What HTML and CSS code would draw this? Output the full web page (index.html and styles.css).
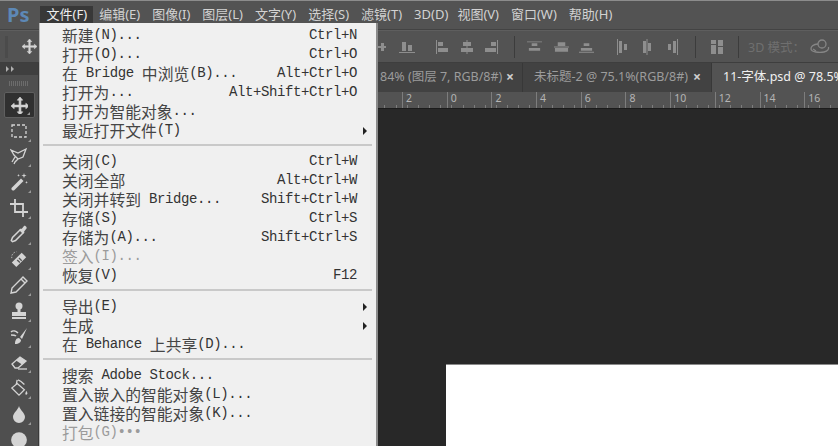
FILE: index.html
```html
<!DOCTYPE html>
<html lang="zh">
<head>
<meta charset="utf-8">
<title>Photoshop</title>
<link rel="stylesheet" href="styles.css">
</head>
<body>
<svg class="defs" width="0" height="0" aria-hidden="true">
  <symbol id="move" viewBox="0 0 16 16"><path d="M8 0 5.600 2.800h1.600v4.400H2.800V5.600L0 8l2.800 2.400V8.800h4.400v4.400H5.600L8 16l2.400-2.800H8.800V8.800h4.400v1.600L16 8l-2.800-2.400v1.600H8.800V2.800h1.600z" fill="currentColor" stroke="currentColor" stroke-width=".6"/></symbol>
</svg>
<div class="app">
  <header class="menubar">
    <span class="logo">Ps</span>
    <nav class="menus">
      <span class="m active">文件(F)</span><span class="m">编辑(E)</span><span class="m">图像(I)</span><span class="m">图层(L)</span><span class="m">文字(Y)</span><span class="m">选择(S)</span><span class="m">滤镜(T)</span><span class="m">3D(D)</span><span class="m">视图(V)</span><span class="m">窗口(W)</span><span class="m">帮助(H)</span>
    </nav>
  </header>

  <section class="options">
    <i class="grip"></i>
    <svg class="opt-move"><use href="#move"/></svg>
    <div class="opt-icons">
      <svg class="oi" viewBox="0 0 16 16"><path d="M0 7h7V4h3v3h2v2h-2v3H7V9H0z"/></svg>
      <svg class="oi g0" viewBox="0 0 16 16"><path d="M0 13h16v1H0zM3 3h4v9H3zM9 6h4v6H9z"/></svg>
      <svg class="oi" viewBox="0 0 16 16"><path d="M2 1h1v14H2zM4 3h5v4H4zM4 9h10v4H4z"/></svg>
      <svg class="oi" viewBox="0 0 16 16"><path d="M7.500 1h1v14h-1zM4 3h8v4H4zM2 9h12v4H2z"/></svg>
      <svg class="oi g1" viewBox="0 0 16 16"><path d="M13 1h1v14h-1zM7 3h5v4H7zM1 9h11v4H1z"/></svg>
      <i class="vline d1"></i>
      <svg class="oi wide g2" viewBox="0 0 16 16"><path d="M0 2h16v1H0zM5 4h6v3H5zM2 9h12v3H2z"/></svg>
      <svg class="oi wide g3" viewBox="0 0 16 16"><path d="M0 7.500h16v1H0zM4 3h8v4H4zM1 9h14v4H1z"/></svg>
      <svg class="oi wide g4" viewBox="0 0 16 16"><path d="M0 13h16v1H0zM5 4h6v3H5zM2 9h12v3H2z"/></svg>
      <svg class="oi g5" viewBox="0 0 16 16"><path d="M3 0h1v16H3zM5 2h3v12H5zM10 5h3v6h-3z"/></svg>
      <svg class="oi g6" viewBox="0 0 16 16"><path d="M4 2h3v12H4zM7.500 0h1v16h-1zM9 4h3v8H9z"/></svg>
      <svg class="oi g7" viewBox="0 0 16 16"><path d="M12 0h1v16h-1zM8 2h3v12H8zM3 5h3v6H3z"/></svg>
      <i class="vline d2"></i>
      <svg class="oi g8" viewBox="0 0 16 16"><path d="M2 1h5v4H2zM2 6h5v9H2zM9 1h5v6H9zM9 8h5v7H9z"/></svg>
      <i class="vline d3"></i>
      <span class="mode">3D 模式：</span>
      <svg class="oi orbit" viewBox="0 0 20 16"><g fill="none" stroke="currentColor" stroke-width="1.300"><circle cx="12" cy="5" r="4"/><path d="M8 5C3 5 .8 8 1 10c.3 3 8 4 13 3 4-.8 5-3 4.500-5"/><path d="M3 10l3 2"/></g></svg>
    </div>
  </section>

  <div class="work">
    <aside class="tools">
      <div class="collapse"><i></i><i></i></div>
      <div class="tgrip"></div>
      <div class="tool sel"><svg viewBox="0 0 18 18"><svg x="1" y="1" width="16" height="16"><use href="#move"/></svg></svg></div>
      <div class="tool"><svg viewBox="0 0 18 18"><rect x="2" y="3" width="14" height="12" fill="none" stroke="currentColor" stroke-width="1.300" stroke-dasharray="3 2"/></svg></div>
      <div class="tool"><svg viewBox="0 0 18 18"><path d="M1 3l7 3 8-4-3 8-5 2-4-4zM8 12l-3 3-1 2M5 10l-3 5" fill="none" stroke="currentColor" stroke-width="1.300"/></svg></div>
      <div class="tool"><svg viewBox="0 0 18 18"><path d="M2 14.500L11 5.500l2.500 2.500-9 9a1.700 1.700 0 0 1-2.500-2.500z" fill="currentColor"/><path d="M14 0l.6 2 2 .6-2 .6-.6 2-.6-2-2-.6 2-.6zM16.500 8l.4 1 1 .4-1 .4-.4 1-.4-1-1-.4 1-.4zM8.500 1l.4 1 1 .4-1 .4-.4 1-.4-1-1-.4 1-.4z" fill="currentColor"/></svg></div>
      <div class="tool"><svg viewBox="0 0 18 18"><path d="M5 0v13h13M0 5h13v13" fill="none" stroke="currentColor" stroke-width="1.800"/></svg></div>
      <div class="tool"><svg viewBox="0 0 18 18"><path d="M10.500 4.500l3 3-8 8-3 1.200-1.200-1.200 1.200-3z" fill="none" stroke="currentColor" stroke-width="1.500"/><path d="M9 5l3-1.500L14 1c1-1 3.500 1.500 2.500 2.500L14.500 6 13 9z" fill="currentColor"/></svg></div>
      <div class="tool"><svg viewBox="0 0 20 20"><path d="M2 14L13 3l5 5L7 19z" fill="currentColor"/><path d="M8 11l3 3M10 9l3 3" stroke="#555" stroke-width="1.500"/><path d="M2 9a6 6 0 0 1 5-7" fill="none" stroke="currentColor" stroke-dasharray="1.500 1.500"/></svg></div>
      <div class="tool"><svg viewBox="0 0 18 18"><path d="M13 1l4 4L6 16l-5 1 1-5z" fill="none" stroke="currentColor" stroke-width="1.400"/><path d="M11 3l4 4" stroke="currentColor" stroke-width="1.400"/></svg></div>
      <div class="tool"><svg viewBox="0 0 18 18"><circle cx="9" cy="4" r="3.500" fill="currentColor"/><path d="M7.500 6h3v4h-3zM2 10h14v4H2zM2 15h14v2H2z" fill="currentColor"/></svg></div>
      <div class="tool"><svg viewBox="0 0 18 18"><path d="M17 0l-7 9 2 2zM9 10c-3 0-4 3-4 6 4 0 6-2 6-4z" fill="currentColor"/><path d="M1 4c2-2 5-1 7 1M1 7c2 0 4 0 5 1" fill="none" stroke="currentColor" stroke-width="1.500"/></svg></div>
      <div class="tool"><svg viewBox="0 0 18 18"><path d="M2 11l8-7 6 4-8 7H5z" fill="none" stroke="currentColor" stroke-width="1.300"/><path d="M10 4l6 4-4 3.500-6-4z" fill="currentColor"/><path d="M8 16h9" stroke="currentColor" stroke-width="1.300"/></svg></div>
      <div class="tool"><svg viewBox="0 0 20 20"><path d="M8 5l8 7-6 6-8-8z" fill="none" stroke="currentColor" stroke-width="1.400"/><path d="M8 1L7 6M9 1c3 1 5 3 7 5" fill="none" stroke="currentColor" stroke-width="1.500"/><path d="M18 13c1 1.500 2 3 1 4s-2 0-2-1z" fill="currentColor"/></svg></div>
      <div class="tool"><svg viewBox="0 0 16 18"><path d="M8 1c1 4 6 7 6 11a6 6 0 0 1-12 0C2 8 7 5 8 1z" fill="currentColor"/></svg></div>
      <div class="tool"><svg viewBox="0 0 16 16"><circle cx="8" cy="8" r="7" fill="currentColor"/></svg></div>
    </aside>

    <main class="doc">
      <div class="tabs">
        <div class="tab first"><span>84% (图层 7, RGB/8#)</span><b>×</b></div>
        <div class="tab second"><span>未标题-2 @ 75.1%(RGB/8#)</span><b>×</b></div>
        <div class="tab current"><span>11-字体.psd @ 78.5% (图层 1, RGB/8#)</span></div>
      </div>
      <div class="ruler">
        <span>2</span><span>0</span><span>2</span><span>4</span><span>6</span><span>8</span><span>10</span><span>12</span><span>14</span><span>16</span>
      </div>
      <div class="canvas"><div class="paper"></div></div>
    </main>
  </div>

  <div class="filemenu">
    <div class="row"><span class="l"><em>新建</em>(N)...</span><span>Ctrl+N</span></div>
    <div class="row"><span class="l"><em>打开</em>(O)...</span><span>Ctrl+O</span></div>
    <div class="row"><span class="l"><em>在</em> Bridge <em>中浏览</em>(B)...</span><span>Alt+Ctrl+O</span></div>
    <div class="row"><span class="l"><em>打开为</em>...</span><span>Alt+Shift+Ctrl+O</span></div>
    <div class="row"><span class="l"><em>打开为智能对象</em>...</span></div>
    <div class="row"><span class="l"><em>最近打开文件</em>(T)</span><i class="arrow"></i></div>
    <hr>
    <div class="row"><span class="l"><em>关闭</em>(C)</span><span>Ctrl+W</span></div>
    <div class="row"><span class="l"><em>关闭全部</em></span><span>Alt+Ctrl+W</span></div>
    <div class="row"><span class="l"><em>关闭并转到</em> Bridge...</span><span>Shift+Ctrl+W</span></div>
    <div class="row"><span class="l"><em>存储</em>(S)</span><span>Ctrl+S</span></div>
    <div class="row"><span class="l"><em>存储为</em>(A)...</span><span>Shift+Ctrl+S</span></div>
    <div class="row off"><span class="l"><em>签入</em>(I)...</span></div>
    <div class="row"><span class="l"><em>恢复</em>(V)</span><span>F12</span></div>
    <hr>
    <div class="row"><span class="l"><em>导出</em>(E)</span><i class="arrow"></i></div>
    <div class="row"><span class="l"><em>生成</em></span><i class="arrow"></i></div>
    <div class="row"><span class="l"><em>在</em> Behance <em>上共享</em>(D)...</span></div>
    <hr>
    <div class="row"><span class="l"><em>搜索</em> Adobe Stock...</span></div>
    <div class="row"><span class="l"><em>置入嵌入的智能对象</em>(L)...</span></div>
    <div class="row"><span class="l"><em>置入链接的智能对象</em>(K)...</span></div>
    <div class="row off"><span class="l"><em>打包</em>(G)•••</span></div>
  </div>
</div>
</body>
</html>
```
FILE: styles.css
```css
* { box-sizing: border-box; }
html, body { margin: 0; height: 100%; }
body { overflow: hidden; background: #282828; font-family: "Noto Sans", "Noto Sans CJK SC", sans-serif; }
.defs { display: block; height: 0; }
.app { position: relative; width: 838px; height: 446px; display: flex; flex-direction: column; overflow: hidden; }

.menubar { flex: 0 0 29px; display: flex; align-items: flex-start; background: #535353; border-top: 1px solid #8c8c8c; border-bottom: 1px solid #434343; }
.logo { width: 40px; padding: 2px 0 0 7px; font: bold 20px/24px "Noto Sans", sans-serif; color: #5d88b6; }
.menus { display: flex; padding-top: 5px; }
.m { padding: 0 5.400px 0 6.600px; height: 18px; font-size: 13px; line-height: 17px; color: #d2d2d2; white-space: nowrap; }
.m:nth-child(8) { padding-right: 2.500px; }
.m.active { background: #383838; color: #eee; height: 23px; }

.options { flex: 0 0 33px; display: flex; align-items: center; background: #535353; border-bottom: 1px solid #3e3e3e; border-top: 1px solid #5e5e5e; }
.grip { width: 3px; height: 22px; margin-left: 5px; background: #4b4b4b; }
.opt-move { width: 15px; height: 15px; margin-left: 14px; color: #d6d6d6; }
.opt-icons { display: flex; align-items: center; margin-left: 337px; }
.oi { width: 16px; height: 16px; fill: #8e8e8e; flex: none; margin-right: 9px; }
.oi.wide { width: 15px; }
.g0 { margin-right: 19px; }
.g1, .g7, .g8 { margin-right: 0; }
.g2 { margin-right: 12px; }
.g3 { margin-right: 10px; }
.g4 { margin-right: 20px; }
.g6 { margin-right: 10px; }
.vline { flex: none; width: 1px; height: 22px; background: #3c3c3c; }
.d1 { margin: 0 12px 0 14px; }
.d2 { margin: 0 13px 0 14px; }
.d3 { margin: 0 9px 0 13px; }
.mode { flex: 0 0 62px; font-size: 12.500px; color: #6f6f6f; white-space: nowrap; }
.orbit { width: 20px; color: #868686; fill: none; margin: 0; }

.work { flex: 1; min-height: 0; display: flex; }
.tools { flex: 0 0 40px; display: flex; flex-direction: column; align-items: center; background: #4f4f4f; border-right: 2px solid #3a3a3a; overflow: hidden; }
.collapse { align-self: stretch; flex: 0 0 12px; display: flex; gap: 2px; align-items: center; padding-left: 6px; background: #3f3f3f; }
.collapse i { width: 0; height: 0; border-left: 3px solid #b0b0b0; border-top: 3px solid transparent; border-bottom: 3px solid transparent; }
.tgrip { flex: 0 0 17px; width: 20px; background: repeating-linear-gradient(90deg, #6c6c6c 0 1px, transparent 1px 2px) center / 20px 5px no-repeat; }
.tool { position: relative; flex: 0 0 25.750px; width: 31px; display: flex; align-items: center; justify-content: center; color: #d4d4d4; }
.tool svg { width: 18px; height: 18px; }
.tool::after { content: ""; position: absolute; right: 4px; bottom: 2px; border-left: 3px solid transparent; border-bottom: 3px solid #9a9a9a; }
.tool.sel { background: #303030; border: 1px solid #5f5f5f; border-radius: 2px; }
.tool:last-child::after { display: none; }

.doc { flex: 1; min-width: 0; display: flex; flex-direction: column; }
.tabs { flex: 0 0 29px; display: flex; background: #424242; font-size: 12.500px; line-height: 28px; white-space: nowrap; }
.tab { flex: none; display: flex; justify-content: space-between; color: #9c9c9c; border-right: 1px solid #383838; }
.tab b { font: bold 14px/28px "Noto Sans", sans-serif; color: #cfcfcf; }
.first { width: 483px; padding: 0 8px 0 340px; }
.second { width: 189px; padding: 0 10px 0 11px; }
.current { flex: 1; padding-left: 11px; background: #535353; color: #f0f0f0; border-right: 0; overflow: hidden; }

.ruler { flex: 0 0 17px; display: flex; padding-left: 362px; background: #535353 repeating-linear-gradient(90deg, transparent 0 10px, #7d7d7d 10px 11px, transparent 11px 11.150px) 0 13px / 100% 3px no-repeat; border-bottom: 1px solid #1c1c1c; overflow: hidden; }
.ruler span { flex: 0 0 44.700px; height: 16px; padding-left: 3px; border-left: 1px solid #7d7d7d; font-size: 10.500px; line-height: 13px; color: #b5b5b5; }

.canvas { flex: 1; min-height: 0; background: #282828; padding: 255px 0 0 406px; }
.paper { height: 100%; background: #fff; border-top: 1px solid #8a8a8a; }

.filemenu { position: absolute; left: 39px; top: 23px; width: 339px; height: 430px; padding-top: 3px; background: #f0f0f0; border-left: 1px solid #b8b8b8; border-right: 2px solid #8b8b8b; font: 14px "Liberation Mono", monospace; letter-spacing: -0.400px; color: #333; }
.row { height: 19px; display: flex; align-items: center; justify-content: space-between; padding: 0 19px 0 22px; line-height: 19px; white-space: pre; }
.row em { font: 15.800px/19px "Noto Sans CJK SC", sans-serif; letter-spacing: 0; color: #454545; }
.row .l { display: inline-flex; align-items: center; white-space: pre; }
.off, .off em { color: #9b9b9b; }
.arrow { width: 0; height: 0; margin-right: -10px; border-left: 4px solid #222; border-top: 4px solid transparent; border-bottom: 4px solid transparent; }
.filemenu hr { height: 2px; margin: 4px 4px 6px 3px; border: 0; background: #c9c9c9; }
```
